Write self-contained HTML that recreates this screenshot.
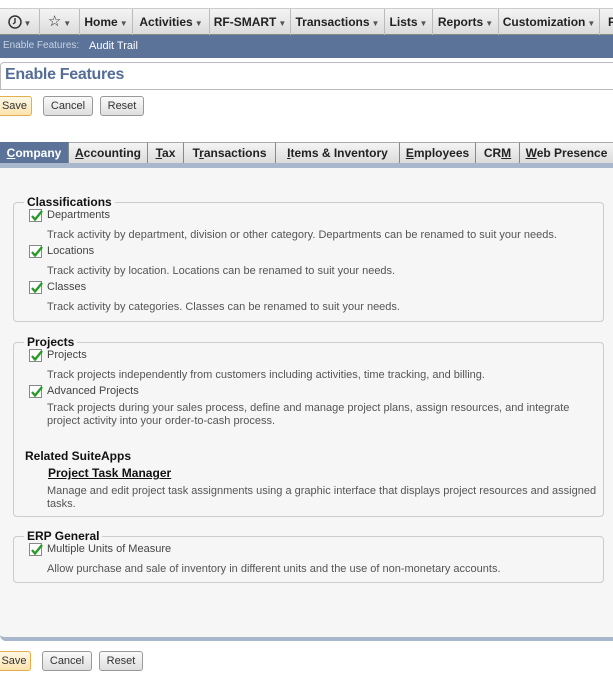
<!DOCTYPE html>
<html><head><style>
*{margin:0;padding:0;box-sizing:border-box}
body{width:613px;height:697px;position:relative;overflow:hidden;background:#fff;font-family:"Liberation Sans",Tahoma,sans-serif;}
.a{position:absolute;white-space:nowrap}
.nav{position:absolute;left:0;top:8px;width:613px;height:27px;background:linear-gradient(#f4f4f4,#dcdcdc);border-top:1px solid #ccc;border-bottom:1px solid #888}
.ni{position:absolute;top:0;height:26px;line-height:26px;font-size:12px;font-weight:bold;color:#222;border-right:1px solid #bbb;text-align:center}
.ni i{font-style:normal;font-size:8px;color:#555;margin-left:2px}
.btn{position:absolute;height:20px;line-height:18px;font-size:11px;color:#333;border:1px solid #999;border-radius:3px;background:linear-gradient(#fafafa,#dedede);text-align:center}
.save{background:linear-gradient(#fff8e6,#fbe3ad);border-color:#e0b050}
.tab{position:absolute;top:142px;height:21px;line-height:21px;font-size:12px;font-weight:bold;color:#222;border-right:1px solid #888;background:linear-gradient(#f4f4f4,#dcdcdc);text-align:center;border-top:1px solid #aaa}
.tab u{text-decoration:underline}
.fs{position:absolute;border:1px solid #ccc;border-radius:4px}
.lg{position:absolute;font-size:12px;font-weight:bold;color:#111;background:#f6f6f6;padding:0 3px}
.cb{position:absolute;width:13px;height:13px;border:1px solid #888;background:#fff}
.cb svg{position:absolute;left:0;top:-1px}
.lb{position:absolute;font-size:11px;color:#444}
.tx{position:absolute;font-size:11px;color:#555;line-height:13px}
</style></head><body>
<div class="nav">
<div class="ni" style="left:0;width:40px"><svg width="14" height="14" style="vertical-align:-3px"><circle cx="7" cy="7" r="6" fill="none" stroke="#333" stroke-width="1.5"/><path d="M7 3V7.5L5 9" stroke="#333" stroke-width="1.4" fill="none"/></svg><i>▼</i></div>
<div class="ni" style="left:40px;width:40px"><span style="font-size:15px;font-weight:normal">☆</span><i>▼</i></div>
<div class="ni" style="left:80px;width:53px">Home<i>▼</i></div>
<div class="ni" style="left:133px;width:77px">Activities<i>▼</i></div>
<div class="ni" style="left:210px;width:81px">RF-SMART<i>▼</i></div>
<div class="ni" style="left:291px;width:94px">Transactions<i>▼</i></div>
<div class="ni" style="left:385px;width:48px">Lists<i>▼</i></div>
<div class="ni" style="left:433px;width:66px">Reports<i>▼</i></div>
<div class="ni" style="left:499px;width:101px">Customization<i>▼</i></div>
<div class="ni" style="left:600px;width:20px;text-align:left;padding-left:8px">P</div>
</div>
<div class="a" style="left:0;top:35px;width:613px;height:23px;background:#5b7398"></div>
<div class="a" style="left:3px;top:40px;font-size:10px;color:#c8d3e3">Enable Features:</div>
<div class="a" style="left:89px;top:40px;font-size:11px;color:#fff">Audit Trail</div>
<div class="a" style="left:0;top:62px;width:613px;height:28px;border-top:1px solid #bbb;border-bottom:1px solid #bbb;border-left:1px solid #bbb;border-radius:4px 0 0 0"></div>
<div class="a" style="left:5px;top:66px;font-size:16px;letter-spacing:-0.3px;font-weight:bold;color:#566e94">Enable Features</div>
<div class="btn save" style="left:-3px;top:96px;width:35px">Save</div>
<div class="btn" style="left:43px;top:96px;width:50px">Cancel</div>
<div class="btn" style="left:100px;top:96px;width:44px">Reset</div>

<div class="tab" style="left:0;width:69px;background:#5b7398;color:#fff;border-top-color:#5b7398"><u>C</u>ompany</div>
<div class="tab" style="left:69px;width:79px"><u>A</u>ccounting</div>
<div class="tab" style="left:148px;width:36px"><u>T</u>ax</div>
<div class="tab" style="left:184px;width:92px">T<u>r</u>ansactions</div>
<div class="tab" style="left:276px;width:124px"><u>I</u>tems &amp; Inventory</div>
<div class="tab" style="left:400px;width:76px"><u>E</u>mployees</div>
<div class="tab" style="left:476px;width:44px">CR<u>M</u></div>
<div class="tab" style="left:520px;width:93px;border-right:none"><u>W</u>eb Presence</div>
<div class="a" style="left:0;top:163px;width:613px;height:5px;background:#a9b7cc"></div>
<div class="a" style="left:0;top:168px;width:613px;height:473px;background:#f6f6f6;border-bottom:4px solid #a9b7cc;border-radius:0 0 0 6px"></div>

<div class="fs" style="left:13px;top:202px;width:591px;height:120px"></div>
<div class="lg" style="left:24px;top:195px">Classifications</div>
<div class="cb" style="left:29px;top:209px"><svg width="14" height="14"><path d="M2 7L5 10.5L12 2" stroke="#2a9a2a" stroke-width="2.4" fill="none"/></svg></div>
<div class="lb" style="left:47px;top:209px">Departments</div>
<div class="tx" style="left:47px;top:229px">Track activity by department, division or other category. Departments can be renamed to suit your needs.</div>
<div class="cb" style="left:29px;top:245px"><svg width="14" height="14"><path d="M2 7L5 10.5L12 2" stroke="#2a9a2a" stroke-width="2.4" fill="none"/></svg></div>
<div class="lb" style="left:47px;top:245px">Locations</div>
<div class="tx" style="left:47px;top:265px">Track activity by location. Locations can be renamed to suit your needs.</div>
<div class="cb" style="left:29px;top:281px"><svg width="14" height="14"><path d="M2 7L5 10.5L12 2" stroke="#2a9a2a" stroke-width="2.4" fill="none"/></svg></div>
<div class="lb" style="left:47px;top:281px">Classes</div>
<div class="tx" style="left:47px;top:301px">Track activity by categories. Classes can be renamed to suit your needs.</div>

<div class="fs" style="left:13px;top:342px;width:591px;height:175px"></div>
<div class="lg" style="left:24px;top:335px">Projects</div>
<div class="cb" style="left:29px;top:349px"><svg width="14" height="14"><path d="M2 7L5 10.5L12 2" stroke="#2a9a2a" stroke-width="2.4" fill="none"/></svg></div>
<div class="lb" style="left:47px;top:349px">Projects</div>
<div class="tx" style="left:47px;top:369px">Track projects independently from customers including activities, time tracking, and billing.</div>
<div class="cb" style="left:29px;top:385px"><svg width="14" height="14"><path d="M2 7L5 10.5L12 2" stroke="#2a9a2a" stroke-width="2.4" fill="none"/></svg></div>
<div class="lb" style="left:47px;top:385px">Advanced Projects</div>
<div class="tx" style="left:47px;top:402px">Track projects during your sales process, define and manage project plans, assign resources, and integrate<br>project activity into your order-to-cash process.</div>
<div class="a" style="left:25px;top:449px;font-size:12px;font-weight:bold;color:#111">Related SuiteApps</div>
<div class="a" style="left:48px;top:466px;font-size:12px;font-weight:bold;color:#111;text-decoration:underline">Project Task Manager</div>
<div class="tx" style="left:47px;top:485px">Manage and edit project task assignments using a graphic interface that displays project resources and assigned<br>tasks.</div>

<div class="fs" style="left:13px;top:536px;width:591px;height:47px"></div>
<div class="lg" style="left:24px;top:529px">ERP General</div>
<div class="cb" style="left:29px;top:543px"><svg width="14" height="14"><path d="M2 7L5 10.5L12 2" stroke="#2a9a2a" stroke-width="2.4" fill="none"/></svg></div>
<div class="lb" style="left:47px;top:543px">Multiple Units of Measure</div>
<div class="tx" style="left:47px;top:563px">Allow purchase and sale of inventory in different units and the use of non-monetary accounts.</div>

<div class="btn save" style="left:-3px;top:651px;width:34px">Save</div>
<div class="btn" style="left:42px;top:651px;width:50px">Cancel</div>
<div class="btn" style="left:99px;top:651px;width:44px">Reset</div>
</body></html>
